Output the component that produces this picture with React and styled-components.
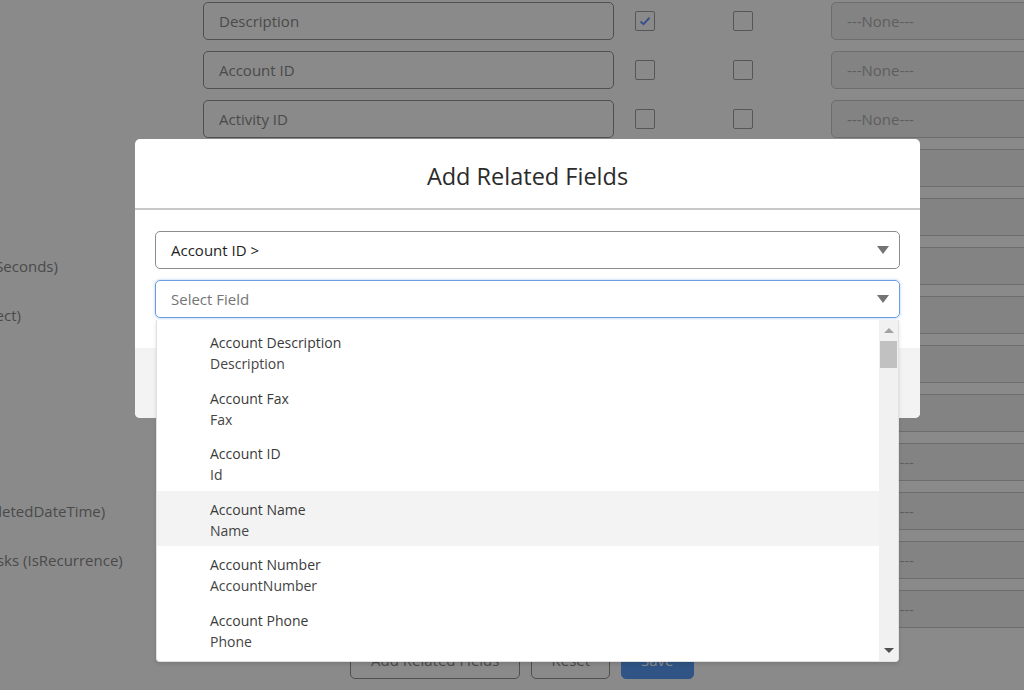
import React from "react";
import styled, { createGlobalStyle } from "styled-components";

const GlobalStyle = createGlobalStyle`
  body {
    margin: 0;
    overflow: hidden;
    font-family: "Open Sans", "Noto Sans", sans-serif;
  }
`;

const Page = styled.div`
  position: relative;
  width: 1024px;
  height: 690px;
  overflow: hidden;
  background: #fff;
`;

const Form = styled.div`
  display: flex;
  flex-direction: column;
  gap: 11px;
  padding-top: 2px;
  margin-left: -205px;
`;

const Row = styled.div`
  display: flex;
  align-items: center;
  height: 38px;
`;

const Label = styled.div`
  width: 408px;
  flex-shrink: 0;
  font-size: 15px;
  color: #8a8a8a;
  white-space: nowrap;
`;

const TextInput = styled.div`
  box-sizing: border-box;
  width: 411px;
  height: 38px;
  flex-shrink: 0;
  border: 1px solid #929292;
  border-radius: 5px;
  padding: 0 15px;
  display: flex;
  align-items: center;
  font-size: 15px;
  color: #8a8a8a;
`;

const Checkbox = styled.div`
  box-sizing: border-box;
  width: 20px;
  height: 20px;
  flex-shrink: 0;
  margin-left: ${(p) => p.$gap}px;
  border: 1px solid #a0a0a0;
  border-radius: 2px;
  display: flex;
  align-items: center;
  justify-content: center;
`;

const NoneSelect = styled.div`
  box-sizing: border-box;
  width: 460px;
  height: 38px;
  flex-shrink: 0;
  margin-left: 78px;
  background: #f3f3f3;
  border: 1px solid #c9c9c9;
  border-radius: 5px;
  padding: 0 15px;
  display: flex;
  align-items: center;
  font-size: 15px;
  color: #aeaeae;
`;

const ButtonBar = styled.div`
  display: flex;
  gap: 11px;
  padding-left: 555px;
  margin-top: 2px;
`;

const PageButton = styled.div`
  box-sizing: border-box;
  height: 38px;
  padding: 0 ${(p) => p.$pad}px;
  border: 1px solid ${(p) => (p.$primary ? "#5a9cf5" : "#929292")};
  background: ${(p) => (p.$primary ? "#5a9cf5" : "#fff")};
  color: ${(p) => (p.$primary ? "#fff" : "#8a8a8a")};
  border-radius: 5px;
  display: flex;
  align-items: center;
  font-size: 15px;
`;

const Backdrop = styled.div`
  position: absolute;
  inset: 0;
  background: rgba(0, 0, 0, 0.46);
`;

const Modal = styled.div`
  position: absolute;
  left: 135px;
  top: 139px;
  width: 785px;
  height: 279px;
  background: #fff;
  border-radius: 5px;
  display: flex;
  flex-direction: column;
`;

const ModalHeader = styled.div`
  height: 71px;
  flex-shrink: 0;
  padding-top: 4px;
  box-sizing: border-box;
  border-bottom: 2px solid #c9c9c9;
  display: flex;
  align-items: center;
  justify-content: center;
  font-size: 23.5px;
  color: #2b2b2b;
`;

const ModalBody = styled.div`
  padding: 21px 20px 0;
  display: flex;
  flex-direction: column;
  gap: 11px;
  height: 117px;
  box-sizing: border-box;
`;

const ModalFooter = styled.div`
  flex: 1;
  background: #f3f3f3;
  border-radius: 0 0 5px 5px;
  margin-top: 21px;
`;

const SelectWrap = styled.div`
  position: relative;
`;

const Select = styled.div`
  box-sizing: border-box;
  height: 38px;
  border: 1px solid ${(p) => (p.$focused ? "#6b9de0" : "#8c8c8c")};
  box-shadow: ${(p) => (p.$focused ? "0 0 3px #a9c8f3" : "none")};
  border-radius: 5px;
  padding: 0 10px 0 15px;
  display: flex;
  align-items: center;
  justify-content: space-between;
  font-size: 15px;
  color: ${(p) => (p.$placeholder ? "#757575" : "#1e1e1e")};
`;

const Caret = styled.span`
  width: 0;
  height: 0;
  border-left: 6px solid transparent;
  border-right: 6px solid transparent;
  border-top: 8px solid #747474;
`;

const Dropdown = styled.div`
  position: absolute;
  left: 1px;
  top: 40px;
  width: 743px;
  height: 342px;
  box-sizing: border-box;
  background: #fff;
  border: 1px solid #e1e1e1;
  border-top: none;
  border-radius: 0 0 4px 4px;
  box-shadow: 0 2px 4px rgba(0, 0, 0, 0.12);
  display: flex;
  overflow: hidden;
`;

const List = styled.div`
  flex: 1;
  padding-top: 4px;
`;

const Item = styled.div`
  padding: 8px 0 5.5px 53px;
  background: ${(p) => (p.$hover ? "#f3f3f3" : "transparent")};
  font-size: 14px;
  line-height: 21px;
`;

const ItemTitle = styled.div`
  color: #3a3a3a;
`;

const ItemApi = styled.div`
  color: #444;
`;

const Scrollbar = styled.div`
  width: 19px;
  flex-shrink: 0;
  background: #f1f1f1;
  display: flex;
  flex-direction: column;
  align-items: center;
  justify-content: space-between;
  padding: 8px 0 8px;
`;

const Arrow = styled.span`
  width: 0;
  height: 0;
  border-left: 5px solid transparent;
  border-right: 5px solid transparent;
  ${(p) =>
    p.$up ? "border-bottom: 5px solid #a3a3a3;" : "border-top: 5px solid #505050;"}
`;

const Thumb = styled.div`
  width: 17px;
  height: 27px;
  background: #c1c1c1;
  margin-top: 8px;
`;

const Track = styled.div`
  display: flex;
  flex-direction: column;
  align-items: center;
`;

const rows = [
  { label: "Description", value: "Description", checked: true },
  { label: "Account ID", value: "Account ID" },
  { label: "Activity ID", value: "Activity ID" },
  { label: "Assigned To ID", value: "Assigned To ID" },
  { label: "Call Result", value: "Call Result" },
  { label: "Call Duration (CallDurationInSeconds)", value: "Call Duration" },
  { label: "Call Object Identifier (CallObject)", value: "Call Object" },
  { label: "Call Type", value: "Call Type" },
  { label: "Comments", value: "Comments" },
  { label: "Company", value: "Company" },
  { label: "Completed Date/Time (CompletedDateTime)", value: "Completed Date" },
  { label: "Create Recurring Series of Tasks (IsRecurrence)", value: "Recurrence" },
  { label: "Created By ID", value: "Created By ID" },
];

const fields = [
  { title: "Account Description", api: "Description" },
  { title: "Account Fax", api: "Fax" },
  { title: "Account ID", api: "Id" },
  { title: "Account Name", api: "Name", hover: true },
  { title: "Account Number", api: "AccountNumber" },
  { title: "Account Phone", api: "Phone" },
  { title: "Account Rating", api: "Rating" },
];

const Check = () => (
  <svg width="12" height="10" viewBox="0 0 12 10">
    <path d="M1.5 5.5 L4.5 8.2 L10.5 1.8" fill="none" stroke="#6f94ff" strokeWidth="2" />
  </svg>
);

const App = () => {
  return (
    <Page>
      <GlobalStyle />
      <Form>
        {rows.map((r) => (
          <Row key={r.label}>
            <Label>{r.label}</Label>
            <TextInput>{r.value}</TextInput>
            <Checkbox $gap={21}>{r.checked && <Check />}</Checkbox>
            <Checkbox $gap={78} />
            <NoneSelect>---None---</NoneSelect>
          </Row>
        ))}
        <ButtonBar>
          <PageButton $pad={20}>Add Related Fields</PageButton>
          <PageButton $pad={19}>Reset</PageButton>
          <PageButton $pad={19} $primary>
            Save
          </PageButton>
        </ButtonBar>
      </Form>
      <Backdrop />
      <Modal>
        <ModalHeader>Add Related Fields</ModalHeader>
        <ModalBody>
          <Select>
            Account ID &gt;
            <Caret />
          </Select>
          <SelectWrap>
            <Select $focused $placeholder>
              Select Field
              <Caret />
            </Select>
            <Dropdown>
              <List>
                {fields.map((f) => (
                  <Item key={f.title} $hover={f.hover}>
                    <ItemTitle>{f.title}</ItemTitle>
                    <ItemApi>{f.api}</ItemApi>
                  </Item>
                ))}
              </List>
              <Scrollbar>
                <Track>
                  <Arrow $up />
                  <Thumb />
                </Track>
                <Arrow />
              </Scrollbar>
            </Dropdown>
          </SelectWrap>
        </ModalBody>
        <ModalFooter />
      </Modal>
    </Page>
  );
};

export default App;
